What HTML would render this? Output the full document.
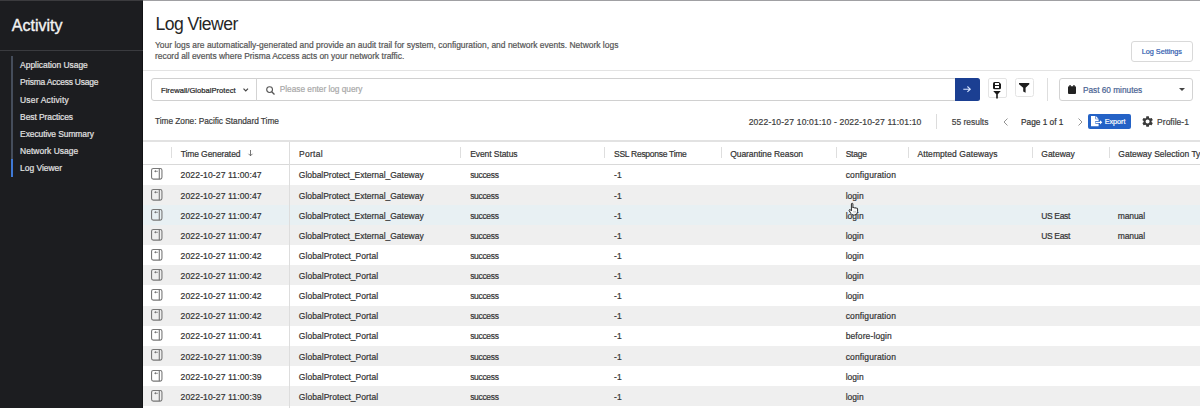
<!DOCTYPE html><html><head><meta charset="utf-8"><style>
html,body{margin:0;padding:0;width:1200px;height:408px;overflow:hidden;background:#fff;}
body{position:relative;font-family:"Liberation Sans",sans-serif;}
.t{position:absolute;white-space:nowrap;-webkit-text-stroke:0.2px currentColor;}
.r{position:absolute;box-sizing:border-box;}
svg{position:absolute;overflow:visible;}
</style></head><body>
<div class="r" style="left:143.00px;top:0.00px;width:1057.00px;height:1.00px;background:#a0a0a3;"></div>
<div class="r" style="left:0.00px;top:0.00px;width:143.00px;height:1.00px;background:#3b3b3e;"></div>
<div class="r" style="left:0.00px;top:1.00px;width:143.00px;height:407.00px;background:#1c1d20;"></div>
<div class="r" style="left:141.60px;top:1.00px;width:1.20px;height:407.00px;background:#121315;"></div>
<div class="t" style="left:11.80px;top:15.70px;font-size:16px;line-height:20px;color:#f4f4f4;font-weight:normal;letter-spacing:0.003px;-webkit-text-stroke:0.35px #f4f4f4;">Activity</div>
<div class="r" style="left:0.00px;top:49.50px;width:143.00px;height:1.20px;background:#3a3b3f;"></div>
<div class="t" style="left:20.10px;top:59.20px;font-size:8.45px;line-height:12px;color:#e2e2e2;font-weight:normal;letter-spacing:-0.018px;">Application Usage</div>
<div class="t" style="left:20.10px;top:76.20px;font-size:8.45px;line-height:12px;color:#e2e2e2;font-weight:normal;letter-spacing:-0.210px;">Prisma Access Usage</div>
<div class="t" style="left:20.10px;top:94.20px;font-size:8.45px;line-height:12px;color:#e2e2e2;font-weight:normal;letter-spacing:0.178px;">User Activity</div>
<div class="t" style="left:20.10px;top:111.20px;font-size:8.45px;line-height:12px;color:#e2e2e2;font-weight:normal;letter-spacing:-0.072px;">Best Practices</div>
<div class="t" style="left:20.10px;top:128.20px;font-size:8.45px;line-height:12px;color:#e2e2e2;font-weight:normal;letter-spacing:-0.079px;">Executive Summary</div>
<div class="t" style="left:20.10px;top:145.20px;font-size:8.45px;line-height:12px;color:#e2e2e2;font-weight:normal;letter-spacing:0.041px;">Network Usage</div>
<div class="t" style="left:20.10px;top:162.20px;font-size:8.45px;line-height:12px;color:#e2e2e2;font-weight:normal;letter-spacing:-0.012px;">Log Viewer</div>
<div class="r" style="left:11.00px;top:56.00px;width:2.00px;height:103.00px;background:#454d5b;"></div>
<div class="r" style="left:11.00px;top:159.00px;width:2.00px;height:18.00px;background:#3f79d6;"></div>
<div class="t" style="left:155.40px;top:13.20px;font-size:17.6px;line-height:22px;color:#262626;font-weight:normal;letter-spacing:-0.524px;-webkit-text-stroke:0;">Log Viewer</div>
<div class="t" style="left:155.00px;top:39.20px;font-size:8.45px;line-height:12px;color:#555;font-weight:normal;letter-spacing:0.010px;">Your logs are automatically-generated and provide an audit trail for system, configuration, and network events. Network logs</div>
<div class="t" style="left:155.00px;top:50.20px;font-size:8.45px;line-height:12px;color:#555;font-weight:normal;letter-spacing:-0.015px;">record all events where Prisma Access acts on your network traffic.</div>
<div class="r" style="left:1131.00px;top:41.40px;width:61.50px;height:20.20px;border:1px solid #d9d9d9;border-radius:3px;background:#fff;"></div>
<div class="t" style="left:1141.80px;top:46.20px;font-size:7.3px;line-height:11px;color:#2f5caf;font-weight:normal;letter-spacing:-0.040px;">Log Settings</div>
<div class="r" style="left:143.00px;top:69.60px;width:1057.00px;height:1.20px;background:#e3e3e3;"></div>
<div class="r" style="left:150.60px;top:78.10px;width:806.00px;height:22.60px;border:1px solid #d0d0d0;border-radius:3px;background:#fff;"></div>
<div class="r" style="left:256.30px;top:78.10px;width:1.00px;height:22.60px;background:#d3d3d3;"></div>
<div class="t" style="left:161.00px;top:84.70px;font-size:7.6px;line-height:12px;color:#2a2a2a;font-weight:normal;letter-spacing:0.016px;-webkit-text-stroke:0.22px #2a2a2a;">Firewall/GlobalProtect</div>
<svg style="left:243px;top:87.8px" width="6" height="4" viewBox="0 0 6 4"><path d="M0.5 0.6 L2.75 3 L5 0.6" fill="none" stroke="#444" stroke-width="1.15"/></svg>
<svg style="left:265.7px;top:86px" width="9" height="9" viewBox="0 0 9 9"><circle cx="3.6" cy="3.6" r="2.9" fill="none" stroke="#555" stroke-width="1.1"/><path d="M5.7 5.7 L8.5 8.5" stroke="#555" stroke-width="1.3"/></svg>
<div class="t" style="left:279.70px;top:83.20px;font-size:8.3px;line-height:12px;color:#a9a9a9;font-weight:normal;letter-spacing:-0.012px;">Please enter log query</div>
<div class="r" style="left:954.50px;top:78.10px;width:25.40px;height:22.60px;background:#1b3f92;border-radius:0 2.5px 2.5px 0;"></div>
<svg style="left:963.4px;top:86.3px" width="8" height="6.4" viewBox="0 0 8 6.4"><path d="M0.3 3.2 H7.3 M4.4 0.5 L7.3 3.2 L4.4 5.9" fill="none" stroke="#d6e4ff" stroke-width="1.1"/></svg>
<div class="r" style="left:987.80px;top:78.10px;width:18.80px;height:19.50px;border:1px solid #e4e4e4;border-radius:2px;background:#fff;"></div>
<svg style="left:993px;top:82px" width="8" height="17" viewBox="0 0 8 17"><path d="M1.5 0 H6 L8 2 V5.8 Q8 7.3 6.5 7.3 H1.5 Q0 7.3 0 5.8 V1.5 Q0 0 1.5 0Z" fill="#1a1a1a"/><rect x="2" y="1" width="4" height="2" fill="#fff" shape-rendering="crispEdges"/><rect x="2" y="4" width="4" height="1.6" fill="#fff" shape-rendering="crispEdges"/><path d="M0.2 9.1 H7.8 L4.8 12.2 V16.4 H3.2 V12.2Z" fill="#1a1a1a"/></svg>
<div class="r" style="left:1014.50px;top:78.10px;width:19.30px;height:19.20px;border:1px solid #e4e4e4;border-radius:2.5px;background:#fff;"></div>
<svg style="left:1019.3px;top:83.1px" width="10.3" height="9.8" viewBox="0 0 10.3 9.8"><path d="M0 0 H10.3 V1.2 L6.6 4.8 V9.8 L4.2 8.6 V4.8 L0 1.2Z" fill="#1e1e1e"/></svg>
<div class="r" style="left:1047.00px;top:78.00px;width:1.00px;height:22.50px;background:#dedede;"></div>
<div class="r" style="left:1058.50px;top:78.20px;width:134.50px;height:22.50px;border:1px solid #d3d3d3;border-radius:3px;background:#fff;"></div>
<svg style="left:1068px;top:85px" width="8" height="9" viewBox="0 0 8 9"><rect x="0" y="1.3" width="8" height="7.7" rx="1" fill="#222"/><rect x="1.4" y="0" width="1.3" height="2.2" fill="#222"/><rect x="5.3" y="0" width="1.3" height="2.2" fill="#222"/></svg>
<div class="t" style="left:1082.90px;top:84.70px;font-size:8.28px;line-height:12px;color:#4a6393;font-weight:normal;letter-spacing:0.002px;">Past 60 minutes</div>
<svg style="left:1178.7px;top:87.5px" width="6" height="3" viewBox="0 0 6 3"><path d="M0 0 H6 L3 3Z" fill="#444"/></svg>
<div class="t" style="left:155.00px;top:115.20px;font-size:8.32px;line-height:12px;color:#3d3d3d;font-weight:normal;letter-spacing:-0.031px;">Time Zone: Pacific Standard Time</div>
<div class="t" style="left:748.70px;top:115.70px;font-size:8.6px;line-height:13px;color:#3d3d3d;font-weight:normal;letter-spacing:0.153px;">2022-10-27 10:01:10 - 2022-10-27 11:01:10</div>
<div class="r" style="left:936.00px;top:113.60px;width:1.00px;height:15.00px;background:#dcdcdc;"></div>
<div class="t" style="left:951.80px;top:116.20px;font-size:8.45px;line-height:12px;color:#444;font-weight:normal;letter-spacing:0.006px;">55 results</div>
<svg style="left:1002.5px;top:117.5px" width="5" height="8" viewBox="0 0 5 8"><path d="M4.5 0.5 L1 4 L4.5 7.5" fill="none" stroke="#888" stroke-width="0.9"/></svg>
<div class="t" style="left:1021.10px;top:116.20px;font-size:8.3px;line-height:12px;color:#333;font-weight:normal;letter-spacing:-0.014px;">Page 1 of 1</div>
<svg style="left:1078px;top:117.5px" width="5" height="8" viewBox="0 0 5 8"><path d="M0.5 0.5 L4 4 L0.5 7.5" fill="none" stroke="#888" stroke-width="0.9"/></svg>
<div class="r" style="left:1088.00px;top:113.50px;width:43.00px;height:15.10px;background:#2462c6;border-radius:2px;"></div>
<svg style="left:1091px;top:115.7px" width="11.5" height="10.2" viewBox="0 0 11.5 10.2"><path d="M0 0 H4.4 V3.3 H7.6 V10.2 H0Z" fill="#fff"/><path d="M5 0.2 L7.5 2.7 H5Z" fill="#fff"/><rect x="4.3" y="5" width="5.2" height="2.7" fill="#2462c6"/><path d="M4.6 5.8 H9 V4.2 L11.3 6.35 L9 8.5 V6.9 H4.6Z" fill="#fff"/></svg>
<div class="t" style="left:1104.70px;top:116.20px;font-size:7.2px;line-height:11px;color:#fff;font-weight:normal;letter-spacing:-0.002px;">Export</div>
<svg style="left:1141.1px;top:114.6px" width="13.2" height="13.2" viewBox="0 0 24 24"><path fill="#3a3a3a" d="M19.14 12.94c.04-.3.06-.61.06-.94 0-.32-.02-.64-.07-.94l2.03-1.58a.49.49 0 0 0 .12-.61l-1.92-3.32a.488.488 0 0 0-.59-.22l-2.39.96c-.5-.38-1.03-.7-1.62-.94l-.36-2.54a.484.484 0 0 0-.48-.41h-3.840c-.24 0-.43.17-.47.41l-.36 2.54c-.59.24-1.130.57-1.62.94l-2.39-.96c-.22-.08-.47 0-.59.22L2.74 8.87c-.12.21-.08.47.12.61l2.030 1.58c-.05.3-.09.63-.09.94s.02.64.07.94l-2.03 1.58a.49.49 0 0 0-.12.61l1.92 3.32c.12.22.37.29.59.22l2.39-.96c.5.38 1.03.7 1.62.94l.36 2.54c.05.24.24.41.48.41h3.84c.24 0 .44-.17.47-.41l.36-2.54c.59-.24 1.13-.56 1.62-.94l2.39.96c.22.08.47 0 .59-.22l1.92-3.32c.12-.22.07-.47-.12-.61l-2.01-1.58zM12 15.6c-1.98 0-3.6-1.62-3.6-3.6s1.62-3.6 3.6-3.6 3.6 1.62 3.6 3.6-1.62 3.6-3.6 3.6z"/></svg>
<div class="t" style="left:1157.10px;top:116.20px;font-size:8.5px;line-height:12px;color:#3d3d3d;font-weight:normal;letter-spacing:0.016px;">Profile-1</div>
<div class="r" style="left:143.00px;top:140.20px;width:1057.00px;height:1.40px;background:#e2e2e2;"></div>
<div class="t" style="left:180.70px;top:148.20px;font-size:8.5px;line-height:12px;color:#333;font-weight:normal;letter-spacing:-0.100px;">Time Generated</div>
<div class="t" style="left:299.00px;top:148.20px;font-size:8.5px;line-height:12px;color:#333;font-weight:normal;letter-spacing:0.299px;">Portal</div>
<div class="t" style="left:470.20px;top:148.20px;font-size:8.5px;line-height:12px;color:#333;font-weight:normal;letter-spacing:-0.075px;">Event Status</div>
<div class="t" style="left:614.10px;top:148.20px;font-size:8.5px;line-height:12px;color:#333;font-weight:normal;letter-spacing:-0.281px;">SSL Response Time</div>
<div class="t" style="left:730.20px;top:148.20px;font-size:8.5px;line-height:12px;color:#333;font-weight:normal;letter-spacing:-0.054px;">Quarantine Reason</div>
<div class="t" style="left:845.70px;top:148.20px;font-size:8.5px;line-height:12px;color:#333;font-weight:normal;letter-spacing:-0.243px;">Stage</div>
<div class="t" style="left:917.50px;top:148.20px;font-size:8.5px;line-height:12px;color:#333;font-weight:normal;letter-spacing:0.072px;">Attempted Gateways</div>
<div class="t" style="left:1041.30px;top:148.20px;font-size:8.5px;line-height:12px;color:#333;font-weight:normal;letter-spacing:-0.021px;">Gateway</div>
<div class="t" style="left:1118.30px;top:148.20px;font-size:8.5px;line-height:12px;color:#333;font-weight:normal;">Gateway Selection Type</div>
<svg style="left:248px;top:150.3px" width="5" height="6.3" viewBox="0 0 5 6.3"><path d="M2.5 0 V5.8 M0.5 3.8 L2.5 5.8 L4.5 3.8" fill="none" stroke="#555" stroke-width="0.8"/></svg>
<div class="r" style="left:170.80px;top:147.00px;width:1.00px;height:11.30px;background:#dedede;"></div>
<div class="r" style="left:460.30px;top:147.00px;width:1.00px;height:11.30px;background:#dedede;"></div>
<div class="r" style="left:603.80px;top:147.00px;width:1.00px;height:11.30px;background:#dedede;"></div>
<div class="r" style="left:720.50px;top:147.00px;width:1.00px;height:11.30px;background:#dedede;"></div>
<div class="r" style="left:836.30px;top:147.00px;width:1.00px;height:11.30px;background:#dedede;"></div>
<div class="r" style="left:908.20px;top:147.00px;width:1.00px;height:11.30px;background:#dedede;"></div>
<div class="r" style="left:1032.00px;top:147.00px;width:1.00px;height:11.30px;background:#dedede;"></div>
<div class="r" style="left:1108.50px;top:147.00px;width:1.00px;height:11.30px;background:#dedede;"></div>
<div class="r" style="left:143.00px;top:164.70px;width:1057.00px;height:20.22px;background:#ffffff;"></div>
<div class="r" style="left:143.00px;top:184.82px;width:1057.00px;height:20.22px;background:#efefef;"></div>
<div class="r" style="left:143.00px;top:204.94px;width:1057.00px;height:20.22px;background:#e8f0f3;"></div>
<div class="r" style="left:143.00px;top:225.06px;width:1057.00px;height:20.22px;background:#efefef;"></div>
<div class="r" style="left:143.00px;top:245.18px;width:1057.00px;height:20.22px;background:#ffffff;"></div>
<div class="r" style="left:143.00px;top:265.30px;width:1057.00px;height:20.22px;background:#efefef;"></div>
<div class="r" style="left:143.00px;top:285.42px;width:1057.00px;height:20.22px;background:#ffffff;"></div>
<div class="r" style="left:143.00px;top:305.54px;width:1057.00px;height:20.22px;background:#efefef;"></div>
<div class="r" style="left:143.00px;top:325.66px;width:1057.00px;height:20.22px;background:#ffffff;"></div>
<div class="r" style="left:143.00px;top:345.78px;width:1057.00px;height:20.22px;background:#efefef;"></div>
<div class="r" style="left:143.00px;top:365.90px;width:1057.00px;height:20.22px;background:#ffffff;"></div>
<div class="r" style="left:143.00px;top:386.02px;width:1057.00px;height:20.22px;background:#efefef;"></div>
<div class="r" style="left:143.00px;top:163.80px;width:1057.00px;height:1.30px;background:#d9d9d9;"></div>
<svg style="left:151.4px;top:168.40px" width="11.5" height="11.7" viewBox="0 0 11.5 11.7"><rect x="0.55" y="0.55" width="10.4" height="10.6" rx="1.8" fill="none" stroke="#777" stroke-width="1.1"/><path d="M8.3 0.6 V11.1" stroke="#777" stroke-width="1.1"/><path d="M3.1 3.3 L4.9 2.1 V4.5Z" fill="#666"/><path d="M4.5 3.3 H6.9" stroke="#777" stroke-width="0.8"/></svg>
<div class="t" style="left:180.60px;top:168.70px;font-size:8.6px;line-height:13px;color:#333;font-weight:normal;letter-spacing:0.104px;">2022-10-27 11:00:47</div>
<div class="t" style="left:298.80px;top:169.20px;font-size:8.5px;line-height:12px;color:#333;font-weight:normal;letter-spacing:-0.029px;">GlobalProtect_External_Gateway</div>
<div class="t" style="left:470.20px;top:169.20px;font-size:8.5px;line-height:12px;color:#333;font-weight:normal;letter-spacing:-0.329px;">success</div>
<div class="t" style="left:614.10px;top:169.20px;font-size:8.5px;line-height:12px;color:#333;font-weight:normal;">-1</div>
<div class="t" style="left:845.70px;top:169.20px;font-size:8.5px;line-height:12px;color:#333;font-weight:normal;letter-spacing:0.133px;">configuration</div>
<svg style="left:151.4px;top:188.52px" width="11.5" height="11.7" viewBox="0 0 11.5 11.7"><rect x="0.55" y="0.55" width="10.4" height="10.6" rx="1.8" fill="none" stroke="#777" stroke-width="1.1"/><path d="M8.3 0.6 V11.1" stroke="#777" stroke-width="1.1"/><path d="M3.1 3.3 L4.9 2.1 V4.5Z" fill="#666"/><path d="M4.5 3.3 H6.9" stroke="#777" stroke-width="0.8"/></svg>
<div class="t" style="left:180.60px;top:189.70px;font-size:8.6px;line-height:13px;color:#333;font-weight:normal;letter-spacing:0.104px;">2022-10-27 11:00:47</div>
<div class="t" style="left:298.80px;top:190.20px;font-size:8.5px;line-height:12px;color:#333;font-weight:normal;letter-spacing:-0.029px;">GlobalProtect_External_Gateway</div>
<div class="t" style="left:470.20px;top:190.20px;font-size:8.5px;line-height:12px;color:#333;font-weight:normal;letter-spacing:-0.329px;">success</div>
<div class="t" style="left:614.10px;top:190.20px;font-size:8.5px;line-height:12px;color:#333;font-weight:normal;">-1</div>
<div class="t" style="left:845.70px;top:190.20px;font-size:8.5px;line-height:12px;color:#333;font-weight:normal;">login</div>
<svg style="left:151.4px;top:208.64px" width="11.5" height="11.7" viewBox="0 0 11.5 11.7"><rect x="0.55" y="0.55" width="10.4" height="10.6" rx="1.8" fill="none" stroke="#777" stroke-width="1.1"/><path d="M8.3 0.6 V11.1" stroke="#777" stroke-width="1.1"/><path d="M3.1 3.3 L4.9 2.1 V4.5Z" fill="#666"/><path d="M4.5 3.3 H6.9" stroke="#777" stroke-width="0.8"/></svg>
<div class="t" style="left:180.60px;top:209.70px;font-size:8.6px;line-height:13px;color:#333;font-weight:normal;letter-spacing:0.104px;">2022-10-27 11:00:47</div>
<div class="t" style="left:298.80px;top:210.20px;font-size:8.5px;line-height:12px;color:#333;font-weight:normal;letter-spacing:-0.029px;">GlobalProtect_External_Gateway</div>
<div class="t" style="left:470.20px;top:210.20px;font-size:8.5px;line-height:12px;color:#333;font-weight:normal;letter-spacing:-0.329px;">success</div>
<div class="t" style="left:614.10px;top:210.20px;font-size:8.5px;line-height:12px;color:#333;font-weight:normal;">-1</div>
<div class="t" style="left:845.70px;top:210.20px;font-size:8.5px;line-height:12px;color:#333;font-weight:normal;">login</div>
<div class="t" style="left:1041.20px;top:210.20px;font-size:8.5px;line-height:12px;color:#333;font-weight:normal;letter-spacing:-0.340px;">US East</div>
<div class="t" style="left:1117.70px;top:210.20px;font-size:8.5px;line-height:12px;color:#333;font-weight:normal;letter-spacing:-0.097px;">manual</div>
<svg style="left:151.4px;top:228.76px" width="11.5" height="11.7" viewBox="0 0 11.5 11.7"><rect x="0.55" y="0.55" width="10.4" height="10.6" rx="1.8" fill="none" stroke="#777" stroke-width="1.1"/><path d="M8.3 0.6 V11.1" stroke="#777" stroke-width="1.1"/><path d="M3.1 3.3 L4.9 2.1 V4.5Z" fill="#666"/><path d="M4.5 3.3 H6.9" stroke="#777" stroke-width="0.8"/></svg>
<div class="t" style="left:180.60px;top:229.70px;font-size:8.6px;line-height:13px;color:#333;font-weight:normal;letter-spacing:0.104px;">2022-10-27 11:00:47</div>
<div class="t" style="left:298.80px;top:230.20px;font-size:8.5px;line-height:12px;color:#333;font-weight:normal;letter-spacing:-0.029px;">GlobalProtect_External_Gateway</div>
<div class="t" style="left:470.20px;top:230.20px;font-size:8.5px;line-height:12px;color:#333;font-weight:normal;letter-spacing:-0.329px;">success</div>
<div class="t" style="left:614.10px;top:230.20px;font-size:8.5px;line-height:12px;color:#333;font-weight:normal;">-1</div>
<div class="t" style="left:845.70px;top:230.20px;font-size:8.5px;line-height:12px;color:#333;font-weight:normal;">login</div>
<div class="t" style="left:1041.20px;top:230.20px;font-size:8.5px;line-height:12px;color:#333;font-weight:normal;letter-spacing:-0.340px;">US East</div>
<div class="t" style="left:1117.70px;top:230.20px;font-size:8.5px;line-height:12px;color:#333;font-weight:normal;letter-spacing:-0.097px;">manual</div>
<svg style="left:151.4px;top:248.88px" width="11.5" height="11.7" viewBox="0 0 11.5 11.7"><rect x="0.55" y="0.55" width="10.4" height="10.6" rx="1.8" fill="none" stroke="#777" stroke-width="1.1"/><path d="M8.3 0.6 V11.1" stroke="#777" stroke-width="1.1"/><path d="M3.1 3.3 L4.9 2.1 V4.5Z" fill="#666"/><path d="M4.5 3.3 H6.9" stroke="#777" stroke-width="0.8"/></svg>
<div class="t" style="left:180.60px;top:249.70px;font-size:8.6px;line-height:13px;color:#333;font-weight:normal;letter-spacing:0.104px;">2022-10-27 11:00:42</div>
<div class="t" style="left:298.80px;top:250.20px;font-size:8.5px;line-height:12px;color:#333;font-weight:normal;letter-spacing:0.043px;">GlobalProtect_Portal</div>
<div class="t" style="left:470.20px;top:250.20px;font-size:8.5px;line-height:12px;color:#333;font-weight:normal;letter-spacing:-0.329px;">success</div>
<div class="t" style="left:614.10px;top:250.20px;font-size:8.5px;line-height:12px;color:#333;font-weight:normal;">-1</div>
<div class="t" style="left:845.70px;top:250.20px;font-size:8.5px;line-height:12px;color:#333;font-weight:normal;">login</div>
<svg style="left:151.4px;top:269.00px" width="11.5" height="11.7" viewBox="0 0 11.5 11.7"><rect x="0.55" y="0.55" width="10.4" height="10.6" rx="1.8" fill="none" stroke="#777" stroke-width="1.1"/><path d="M8.3 0.6 V11.1" stroke="#777" stroke-width="1.1"/><path d="M3.1 3.3 L4.9 2.1 V4.5Z" fill="#666"/><path d="M4.5 3.3 H6.9" stroke="#777" stroke-width="0.8"/></svg>
<div class="t" style="left:180.60px;top:269.70px;font-size:8.6px;line-height:13px;color:#333;font-weight:normal;letter-spacing:0.104px;">2022-10-27 11:00:42</div>
<div class="t" style="left:298.80px;top:270.20px;font-size:8.5px;line-height:12px;color:#333;font-weight:normal;letter-spacing:0.043px;">GlobalProtect_Portal</div>
<div class="t" style="left:470.20px;top:270.20px;font-size:8.5px;line-height:12px;color:#333;font-weight:normal;letter-spacing:-0.329px;">success</div>
<div class="t" style="left:614.10px;top:270.20px;font-size:8.5px;line-height:12px;color:#333;font-weight:normal;">-1</div>
<div class="t" style="left:845.70px;top:270.20px;font-size:8.5px;line-height:12px;color:#333;font-weight:normal;">login</div>
<svg style="left:151.4px;top:289.12px" width="11.5" height="11.7" viewBox="0 0 11.5 11.7"><rect x="0.55" y="0.55" width="10.4" height="10.6" rx="1.8" fill="none" stroke="#777" stroke-width="1.1"/><path d="M8.3 0.6 V11.1" stroke="#777" stroke-width="1.1"/><path d="M3.1 3.3 L4.9 2.1 V4.5Z" fill="#666"/><path d="M4.5 3.3 H6.9" stroke="#777" stroke-width="0.8"/></svg>
<div class="t" style="left:180.60px;top:289.70px;font-size:8.6px;line-height:13px;color:#333;font-weight:normal;letter-spacing:0.104px;">2022-10-27 11:00:42</div>
<div class="t" style="left:298.80px;top:290.20px;font-size:8.5px;line-height:12px;color:#333;font-weight:normal;letter-spacing:0.043px;">GlobalProtect_Portal</div>
<div class="t" style="left:470.20px;top:290.20px;font-size:8.5px;line-height:12px;color:#333;font-weight:normal;letter-spacing:-0.329px;">success</div>
<div class="t" style="left:614.10px;top:290.20px;font-size:8.5px;line-height:12px;color:#333;font-weight:normal;">-1</div>
<div class="t" style="left:845.70px;top:290.20px;font-size:8.5px;line-height:12px;color:#333;font-weight:normal;">login</div>
<svg style="left:151.4px;top:309.24px" width="11.5" height="11.7" viewBox="0 0 11.5 11.7"><rect x="0.55" y="0.55" width="10.4" height="10.6" rx="1.8" fill="none" stroke="#777" stroke-width="1.1"/><path d="M8.3 0.6 V11.1" stroke="#777" stroke-width="1.1"/><path d="M3.1 3.3 L4.9 2.1 V4.5Z" fill="#666"/><path d="M4.5 3.3 H6.9" stroke="#777" stroke-width="0.8"/></svg>
<div class="t" style="left:180.60px;top:309.70px;font-size:8.6px;line-height:13px;color:#333;font-weight:normal;letter-spacing:0.104px;">2022-10-27 11:00:42</div>
<div class="t" style="left:298.80px;top:310.20px;font-size:8.5px;line-height:12px;color:#333;font-weight:normal;letter-spacing:0.043px;">GlobalProtect_Portal</div>
<div class="t" style="left:470.20px;top:310.20px;font-size:8.5px;line-height:12px;color:#333;font-weight:normal;letter-spacing:-0.329px;">success</div>
<div class="t" style="left:614.10px;top:310.20px;font-size:8.5px;line-height:12px;color:#333;font-weight:normal;">-1</div>
<div class="t" style="left:845.70px;top:310.20px;font-size:8.5px;line-height:12px;color:#333;font-weight:normal;letter-spacing:0.133px;">configuration</div>
<svg style="left:151.4px;top:329.36px" width="11.5" height="11.7" viewBox="0 0 11.5 11.7"><rect x="0.55" y="0.55" width="10.4" height="10.6" rx="1.8" fill="none" stroke="#777" stroke-width="1.1"/><path d="M8.3 0.6 V11.1" stroke="#777" stroke-width="1.1"/><path d="M3.1 3.3 L4.9 2.1 V4.5Z" fill="#666"/><path d="M4.5 3.3 H6.9" stroke="#777" stroke-width="0.8"/></svg>
<div class="t" style="left:180.60px;top:329.70px;font-size:8.6px;line-height:13px;color:#333;font-weight:normal;letter-spacing:0.104px;">2022-10-27 11:00:41</div>
<div class="t" style="left:298.80px;top:330.20px;font-size:8.5px;line-height:12px;color:#333;font-weight:normal;letter-spacing:0.043px;">GlobalProtect_Portal</div>
<div class="t" style="left:470.20px;top:330.20px;font-size:8.5px;line-height:12px;color:#333;font-weight:normal;letter-spacing:-0.329px;">success</div>
<div class="t" style="left:614.10px;top:330.20px;font-size:8.5px;line-height:12px;color:#333;font-weight:normal;">-1</div>
<div class="t" style="left:845.70px;top:330.20px;font-size:8.5px;line-height:12px;color:#333;font-weight:normal;letter-spacing:0.109px;">before-login</div>
<svg style="left:151.4px;top:349.48px" width="11.5" height="11.7" viewBox="0 0 11.5 11.7"><rect x="0.55" y="0.55" width="10.4" height="10.6" rx="1.8" fill="none" stroke="#777" stroke-width="1.1"/><path d="M8.3 0.6 V11.1" stroke="#777" stroke-width="1.1"/><path d="M3.1 3.3 L4.9 2.1 V4.5Z" fill="#666"/><path d="M4.5 3.3 H6.9" stroke="#777" stroke-width="0.8"/></svg>
<div class="t" style="left:180.60px;top:350.70px;font-size:8.6px;line-height:13px;color:#333;font-weight:normal;letter-spacing:0.104px;">2022-10-27 11:00:39</div>
<div class="t" style="left:298.80px;top:351.20px;font-size:8.5px;line-height:12px;color:#333;font-weight:normal;letter-spacing:0.043px;">GlobalProtect_Portal</div>
<div class="t" style="left:470.20px;top:351.20px;font-size:8.5px;line-height:12px;color:#333;font-weight:normal;letter-spacing:-0.329px;">success</div>
<div class="t" style="left:614.10px;top:351.20px;font-size:8.5px;line-height:12px;color:#333;font-weight:normal;">-1</div>
<div class="t" style="left:845.70px;top:351.20px;font-size:8.5px;line-height:12px;color:#333;font-weight:normal;letter-spacing:0.133px;">configuration</div>
<svg style="left:151.4px;top:369.60px" width="11.5" height="11.7" viewBox="0 0 11.5 11.7"><rect x="0.55" y="0.55" width="10.4" height="10.6" rx="1.8" fill="none" stroke="#777" stroke-width="1.1"/><path d="M8.3 0.6 V11.1" stroke="#777" stroke-width="1.1"/><path d="M3.1 3.3 L4.9 2.1 V4.5Z" fill="#666"/><path d="M4.5 3.3 H6.9" stroke="#777" stroke-width="0.8"/></svg>
<div class="t" style="left:180.60px;top:370.70px;font-size:8.6px;line-height:13px;color:#333;font-weight:normal;letter-spacing:0.104px;">2022-10-27 11:00:39</div>
<div class="t" style="left:298.80px;top:371.20px;font-size:8.5px;line-height:12px;color:#333;font-weight:normal;letter-spacing:0.043px;">GlobalProtect_Portal</div>
<div class="t" style="left:470.20px;top:371.20px;font-size:8.5px;line-height:12px;color:#333;font-weight:normal;letter-spacing:-0.329px;">success</div>
<div class="t" style="left:614.10px;top:371.20px;font-size:8.5px;line-height:12px;color:#333;font-weight:normal;">-1</div>
<div class="t" style="left:845.70px;top:371.20px;font-size:8.5px;line-height:12px;color:#333;font-weight:normal;">login</div>
<svg style="left:151.4px;top:389.72px" width="11.5" height="11.7" viewBox="0 0 11.5 11.7"><rect x="0.55" y="0.55" width="10.4" height="10.6" rx="1.8" fill="none" stroke="#777" stroke-width="1.1"/><path d="M8.3 0.6 V11.1" stroke="#777" stroke-width="1.1"/><path d="M3.1 3.3 L4.9 2.1 V4.5Z" fill="#666"/><path d="M4.5 3.3 H6.9" stroke="#777" stroke-width="0.8"/></svg>
<div class="t" style="left:180.60px;top:390.70px;font-size:8.6px;line-height:13px;color:#333;font-weight:normal;letter-spacing:0.104px;">2022-10-27 11:00:39</div>
<div class="t" style="left:298.80px;top:391.20px;font-size:8.5px;line-height:12px;color:#333;font-weight:normal;letter-spacing:0.043px;">GlobalProtect_Portal</div>
<div class="t" style="left:470.20px;top:391.20px;font-size:8.5px;line-height:12px;color:#333;font-weight:normal;letter-spacing:-0.329px;">success</div>
<div class="t" style="left:614.10px;top:391.20px;font-size:8.5px;line-height:12px;color:#333;font-weight:normal;">-1</div>
<div class="t" style="left:845.70px;top:391.20px;font-size:8.5px;line-height:12px;color:#333;font-weight:normal;">login</div>
<div class="r" style="left:289.10px;top:141.50px;width:1.00px;height:266.50px;background:#dddddd;"></div>
<svg style="left:848.3px;top:202.8px" width="11.5" height="12.5" viewBox="0 0 12 15"><path d="M3.2 1.2 Q3.2 0.3 4.1 0.3 Q5 0.3 5 1.2 V6 Q5.2 5.3 6 5.3 Q6.8 5.3 6.9 6.2 Q7.1 5.6 7.8 5.6 Q8.6 5.6 8.7 6.5 Q8.9 6 9.6 6 Q10.6 6 10.6 7.2 V10.5 Q10.6 14.4 6.8 14.4 H5.8 Q3.5 14.4 2.4 12.4 L0.5 9.2 Q0.1 8.3 0.9 7.9 Q1.6 7.6 2.2 8.3 L3.2 9.4Z" fill="#fafafa" stroke="#1a1a1a" stroke-width="1.1"/><path d="M6.2 9.5 V11.5 M7.8 9.5 V11.5" stroke="#888" stroke-width="0.6"/></svg>
</body></html>
